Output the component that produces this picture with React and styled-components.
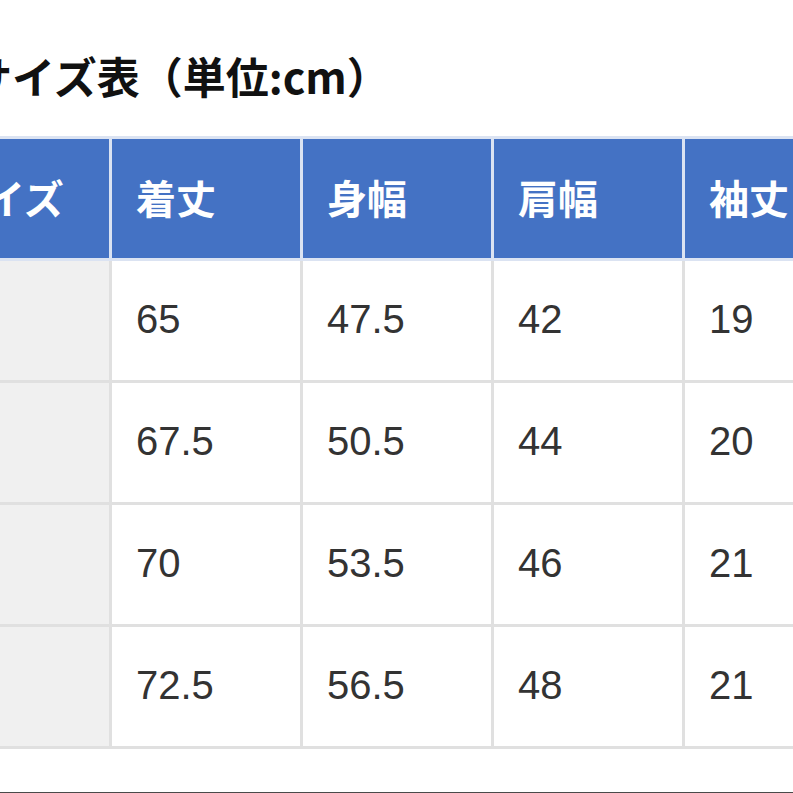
import styled, { createGlobalStyle } from "styled-components";

const GlobalStyle = createGlobalStyle`
  html, body {
    margin: 0;
    padding: 0;
    background: #ffffff;
  }
  body {
    overflow: hidden;
  }
`;

const columns = ["サイズ", "着丈", "身幅", "肩幅", "袖丈"];

const rows = [
  { size: "S", values: ["65", "47.5", "42", "19"] },
  { size: "M", values: ["67.5", "50.5", "44", "20"] },
  { size: "L", values: ["70", "53.5", "46", "21"] },
  { size: "XL", values: ["72.5", "56.5", "48", "21"] },
];

export default function App() {
  return (
    <>
      <GlobalStyle />
      <Page>
        <Title>サイズ表（単位:cm）</Title>
        <SizeTable>
          {columns.map((label) => (
            <HeadCell key={label}>{label}</HeadCell>
          ))}
          {rows.map((row) => (
            <Row key={row.size}>
              <SizeCell>{row.size}</SizeCell>
              {row.values.map((value, i) => (
                <DataCell key={i}>{value}</DataCell>
              ))}
            </Row>
          ))}
        </SizeTable>
      </Page>
    </>
  );
}

const Page = styled.div`
  width: 793px;
  height: 793px;
  box-sizing: border-box;
  border-bottom: 1px solid #4a4a4a;
  overflow: hidden;
  padding-top: 50px;
`;

const Title = styled.h2`
  margin: 0 0 0 -31px;
  font-family: "Noto Sans CJK JP", sans-serif;
  font-size: 43px;
  font-weight: 700;
  line-height: 50px;
  color: #111111;
  white-space: nowrap;
`;

const SizeTable = styled.div`
  display: grid;
  grid-template-columns: repeat(5, 191px);
  grid-auto-rows: 122px;
  width: max-content;
  margin: 36px 0 0 -79px;
  border-top: 3px solid #dbe3f2;
`;

const Row = styled.div`
  display: contents;
`;

const Cell = styled.div`
  box-sizing: border-box;
  display: flex;
  align-items: center;
  padding: 0 0 2px 24px;
  border-right: 3px solid #e0e0e0;
  border-bottom: 3px solid #e0e0e0;
  white-space: nowrap;
`;

const HeadCell = styled(Cell)`
  background: #4472c4;
  border-color: #dbe3f2;
  color: #ffffff;
  font-family: "Noto Sans CJK JP", sans-serif;
  font-size: 40px;
  font-weight: 700;
  padding-bottom: 4px;
`;

const SizeCell = styled(Cell)`
  background: #f0f0f0;
  color: #333333;
  font-family: "Liberation Sans", Arial, sans-serif;
  font-size: 40px;
`;

const DataCell = styled(Cell)`
  background: #ffffff;
  color: #333333;
  font-family: "Liberation Sans", Arial, sans-serif;
  font-size: 40px;
`;
